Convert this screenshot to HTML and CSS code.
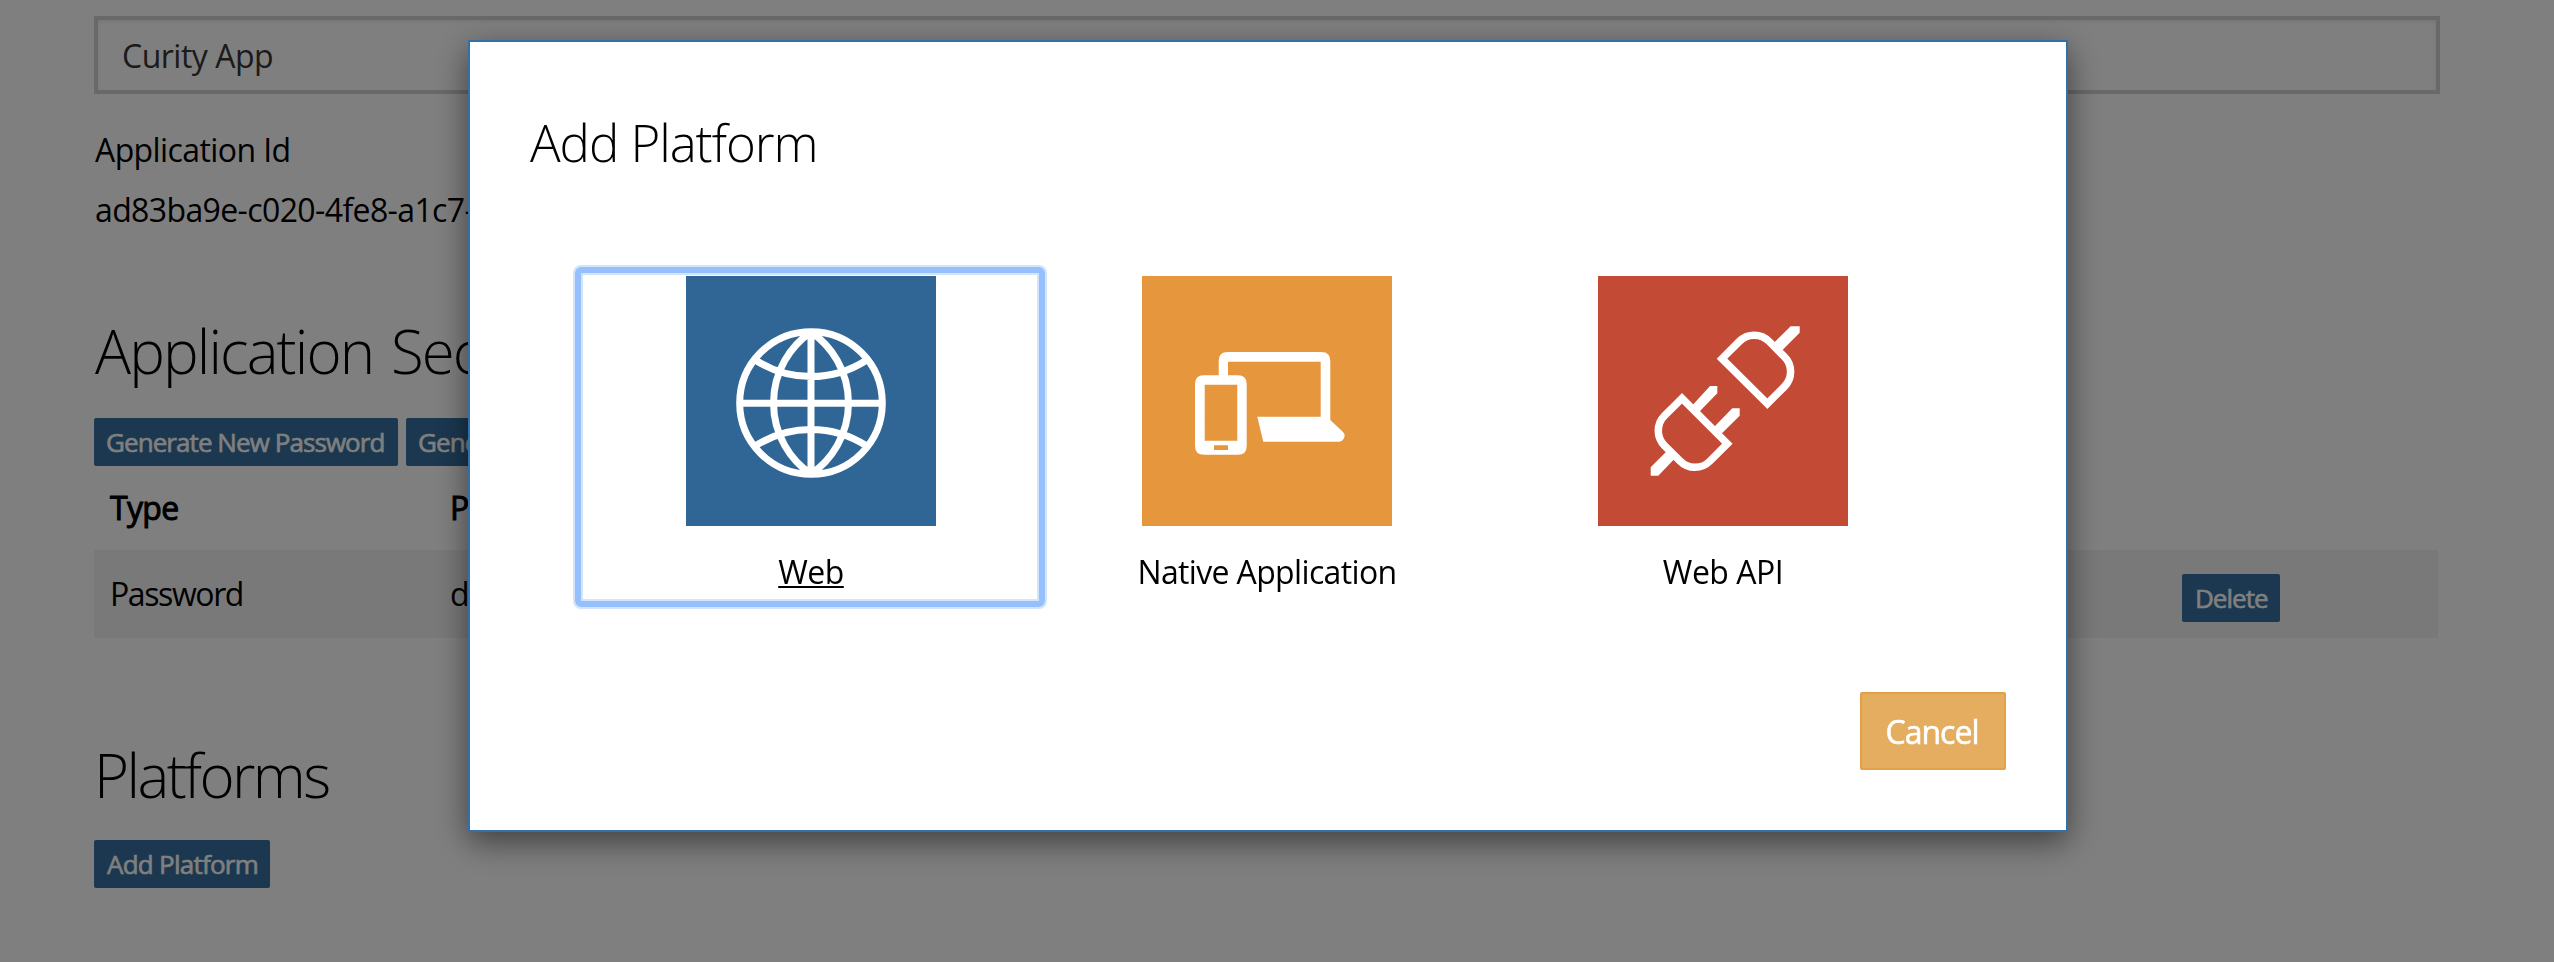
FILE: index.html
```html
<!DOCTYPE html>
<html lang="en">
<head>
<meta charset="utf-8">
<title>Add Platform</title>
<link rel="stylesheet" href="styles.css">
</head>
<body>
<main class="page">
  <div class="name-field">Curity App</div>
  <div class="label">Application Id</div>
  <div class="app-id">ad83ba9e-c020-4fe8-a1c7-</div>
  <h2 class="heading">Application Secrets</h2>
  <div class="buttons">
    <button class="btn btn-generate">Generate New Password</button>
    <button class="btn btn-generate">Generate New Key Pair</button>
  </div>
  <div class="row row-head"><span class="col-type">Type</span><span class="col-value">Password</span></div>
  <div class="row row-item">
    <span class="col-type">Password</span><span class="col-value">d</span>
    <button class="btn btn-delete">Delete</button>
  </div>
  <h2 class="heading heading-platforms">Platforms</h2>
  <div class="buttons"><button class="btn btn-add">Add Platform</button></div>
</main>
<div class="overlay">
  <section class="modal" role="dialog">
    <h3 class="modal-title">Add Platform</h3>
    <div class="tiles">
      <a class="tile tile-focused">
        <svg class="icon icon-web" viewBox="0 0 250 250" fill="none" stroke="#fff" stroke-width="7">
          <circle cx="125" cy="127" r="71.3"/>
          <path d="M125 55v144M54 127.300h142M125 56A86 86 0 0 0 125 198M125 56A86 86 0 0 1 125 198M70 84.500A102 102 0 0 0 180 84.500M70 169.500A102 102 0 0 1 180 169.500"/>
        </svg>
        <span class="tile-name name-web">Web</span>
      </a>
      <a class="tile">
        <svg class="icon icon-native" viewBox="0 0 250 250" fill="#fff">
          <path fill-rule="evenodd" d="M61.500 99.300H76.700V85Q76.700 76 85.700 76H179.300Q188.300 76 188.300 85V144L201 156Q204 159 201.500 163Q200 165.700 197 165.700H121.300L115.300 140.700H178.700V85.700H86V99.300H96Q104.700 99.300 104.700 108V170Q104.700 178.700 96 178.700H62Q53 178.700 53 170V108Q53 99.300 61.500 99.300ZM62.700 108.700V164.700H95.300V108.700ZM72 169.300V174H86V169.300Z"/>
        </svg>
        <span class="tile-name name-native">Native Application</span>
      </a>
      <a class="tile">
        <svg class="icon icon-api" viewBox="0 0 250 250">
          <g fill="none" stroke="#fff" stroke-width="7.500">
            <path d="M169.300 127.700L124 82.700L141.200 65.500A21 21 0 0 1 171.200 65.500L186.300 80.700A21 21 0 0 1 186.300 110.700Z"/>
            <path d="M84 122.300L66.600 139.700A21 21 0 0 0 66.600 169.700L82 185A21 21 0 0 0 112 185L129.300 167.700Z"/>
          </g>
          <path fill="#fff" d="M174.700 68L192.700 50.300H201.700V56.700L183.700 74.700ZM70 174L52.700 191.300V199.700H60.300L77.300 182ZM94.700 129L112 110H119.300V117.300L101.300 135.700ZM116.300 150.700L134.300 132.300H141.700V139.700L124 157.300Z"/>
        </svg>
        <span class="tile-name name-api">Web API</span>
      </a>
    </div>
    <div class="modal-footer"><button class="cancel">Cancel</button></div>
  </section>
</div>
</body>
</html>
```
FILE: styles.css
```css
* { box-sizing: border-box; }
body {
  margin: 0;
  height: 962px;
  overflow: hidden;
  background: #fff;
  color: #000;
  font: 32px/44px "Open Sans", "Noto Sans", sans-serif;
}
.page { width: 2440px; padding: 16px 0 0 94px; }
.name-field {
  height: 78px;
  padding: 14px 24px;
  border: 4px solid #d2d2d2;
  box-shadow: inset 0 2px 4px rgba(0, 0, 0, .08);
  color: #363636;
  letter-spacing: -.5px;
}
.label { margin-top: 34px; padding-left: 1px; letter-spacing: -.6px; }
.app-id { margin-top: 16px; padding-left: 1px; letter-spacing: -.62px; }
.heading {
  margin: 79px 0 0;
  padding: 1px 0 0 1px;
  font-size: 60px;
  line-height: 79px;
  font-weight: 300;
  letter-spacing: -1.9px;
  word-spacing: 4px;
}
.buttons { display: flex; gap: 8px; margin-top: 27px; }
.btn {
  height: 48px;
  padding: 0 0 0 12px;
  border: 0;
  border-radius: 2px;
  background: #3670a0;
  color: #fff;
  font: 26px/48px "Open Sans", "Noto Sans", sans-serif;
  text-align: left;
  letter-spacing: -.93px;
  -webkit-text-stroke: .6px #fff;
  white-space: nowrap;
}
.btn-generate { width: 304px; }
.btn-add { width: 176px; letter-spacing: -.75px; padding-left: 13px; }
.btn-delete { width: 98px; margin-left: auto; margin-right: 158px; padding-left: 13px; letter-spacing: -1px; }
.row { display: flex; width: 2344px; padding-left: 16px; }
.row-head { height: 84px; padding-top: 20px; letter-spacing: -.7px; -webkit-text-stroke: 1px #000; }
.row-item { height: 88px; background: #f2f2f2; padding-top: 24px; line-height: 40px; letter-spacing: -1.4px; }
.col-type { width: 340px; }
.heading-platforms { margin-top: 97px; padding-left: 0; letter-spacing: -2.6px; }
.heading-platforms + .buttons { margin-top: 25px; }
.overlay {
  position: fixed;
  inset: 0;
  padding: 40px 18px 0 0;
  background: rgba(0, 0, 0, .5);
}
.modal {
  width: 1600px;
  height: 792px;
  margin: 0 auto;
  padding: 68px 60px 0;
  border: 2px solid #356fa8;
  background: #fff;
  box-shadow: 0 10px 30px rgba(0, 0, 0, .5);
}
.modal-title {
  margin: 0;
  font-size: 51px;
  line-height: 64px;
  font-weight: 300;
  letter-spacing: -1.05px;
}
.tiles { display: flex; margin: 102px 0 0 53px; }
.tile {
  position: relative;
  display: flex;
  flex-direction: column;
  align-items: center;
  width: 456px;
  height: 324px;
}
.tile-focused { text-decoration: underline; text-decoration-thickness: 2px; text-underline-offset: 2px; }
.tile-focused::after {
  content: "";
  position: absolute;
  inset: -9px -6px -7px -8px;
  border: 6px solid #95bffd;
  border-radius: 6px;
  box-shadow: 0 0 0 2px #d3e4fd, inset 0 0 0 2px #d3e4fd;
}
.icon { width: 250px; height: 250px; }
.icon-web { background: #2f6695; }
.icon-native { background: #e6963d; }
.icon-api { background: #c34a34; }
.tile-name { margin-top: 24px; letter-spacing: -.5px; }
.name-native { letter-spacing: -.65px; }
.modal-footer { display: flex; justify-content: flex-end; margin-top: 92px; }
.cancel {
  width: 146px;
  height: 78px;
  padding: 1px 2px 0 0;
  border: 2px solid #e3a046;
  border-radius: 2px;
  background: #e4ad5f;
  color: #fff;
  font: 32px/73px "Open Sans", "Noto Sans", sans-serif;
  letter-spacing: -1px;
  -webkit-text-stroke: .6px #fff;
}
```
